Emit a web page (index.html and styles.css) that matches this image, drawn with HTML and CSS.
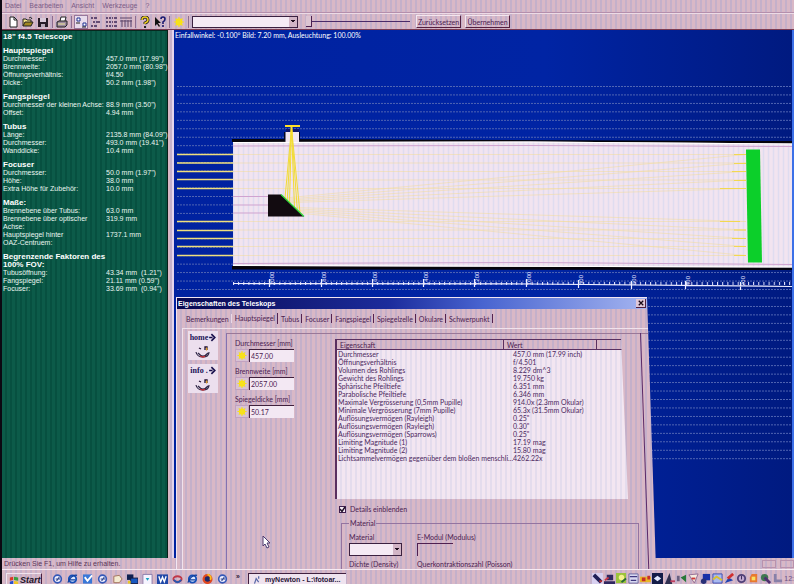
FILE: index.html
```
<!DOCTYPE html>
<html lang="de">
<head>
<meta charset="utf-8">
<title>myNewton</title>
<link rel="stylesheet" href="styles.css">
</head>
<body>
<svg class="defs" aria-hidden="true">
  <symbol id="ie" viewBox="0 0 12 12"><circle cx="6" cy="6" r="4" fill="#dce8ff" stroke="#1550b8" stroke-width="2"/><path d="M3 7h6M1 10C2 5 7 1 11 2" stroke="#1040a0" stroke-width="1.4" fill="none"/></symbol>
  <symbol id="ring" viewBox="0 0 12 12"><circle cx="6" cy="6" r="4.2" fill="#eef" stroke="#3458b8" stroke-width="1.8"/><path d="M4 6h5M5 8l3-4" stroke="#334a90" stroke-width="1.2"/></symbol>
  <symbol id="sun" viewBox="0 0 12 12"><circle cx="6" cy="6" r="3.4" fill="#ffe600"/><path d="M6 1v10M1 6h10M2.5 2.5l7 7M9.500 2.500l-7 7" stroke="#f6e020" stroke-width="1.2"/></symbol>
  <symbol id="face" viewBox="0 0 16 14"><path d="M1 7q1 5 7 5t6-5M3 8q5 6 10 0" stroke="#302848" stroke-width="1.2" fill="none"/><path d="M4 3l2 1M10 5V2h2v3" stroke="#201030" stroke-width="1.3" fill="none"/><path d="M11 2l2 2-2 2" fill="#e0a030"/><path d="M5 11q3 2 5 0" stroke="#c03038" stroke-width="1.4" fill="none"/></symbol>
</svg>
<div class="app">
  <nav class="menubar" aria-label="Menü">
    <a href="#">Datei</a><a href="#">Bearbeiten</a><a href="#">Ansicht</a><a href="#">Werkzeuge</a><a href="#">?</a>
  </nav>

  <div class="toolbar">
    <div class="tools">
      <button aria-label="Neu"><svg viewBox="0 0 12 12"><path d="M3 1h4l3 3v7H3z" fill="#fff" stroke="#222"/><path d="M7 1v3h3" fill="none" stroke="#222"/></svg></button>
      <button aria-label="Öffnen"><svg viewBox="0 0 12 12"><path d="M1 10V3h3l1 1h4v2" fill="#f5e58a" stroke="#222"/><path d="M1 10l2-4h8l-2 4z" fill="#a08820" stroke="#222"/><path d="M7 2q2-2 3 1" fill="none" stroke="#222"/></svg></button>
      <button aria-label="Speichern"><svg viewBox="0 0 12 12"><path d="M1 2h10v9H1z" fill="#281c28"/><path d="M3 2h6v4H3z" fill="#d8c8d8"/><path d="M4 8h4v3H4z" fill="#b8a8b8"/></svg></button>
      <i class="sep"></i>
      <button aria-label="Drucken"><svg viewBox="0 0 12 12"><path d="M4 5l1-4h5L9 5" fill="#fff" stroke="#222"/><path d="M1 6l2-1h8v4l-2 2H1z" fill="#9a8a9c" stroke="#222"/><path d="M2 8h7" stroke="#f4f0a0"/></svg></button>
      <i class="sep"></i>
      <button class="on" aria-label="Große Symbole"><svg viewBox="0 0 12 12"><path d="M2 2h3v3H2zM8 7h3v3H8z" fill="#fff" stroke="#203090"/><path d="M1 7h4M7 11h4" stroke="#222"/></svg></button>
      <button aria-label="Kleine Symbole"><svg viewBox="0 0 12 12"><path d="M1 2h2M4 2h3M3 6h2M6 6h4M1 10h2M4 10h3" stroke="#402858" stroke-width="1.600"/></svg></button>
      <button aria-label="Liste"><svg viewBox="0 0 12 12"><path d="M1 2h2M4 2h2M7 2h1M9 2h3M1 6h2M4 6h2M7 6h1M9 6h3M1 10h2M4 10h2M7 10h1M9 10h3" stroke="#402858" stroke-width="1.600"/></svg></button>
      <button aria-label="Details"><svg viewBox="0 0 12 12"><path d="M0 2h12M2 4v7M5 4v7M8 4v7M11 4v7M0 5h12" stroke="#5c4468"/></svg></button>
      <i class="sep"></i>
      <button aria-label="Hilfe"><svg viewBox="0 0 12 12"><path d="M3 4q0-3 3-3t3 3q0 2-3 3v1" fill="none" stroke="#222" stroke-width="3"/><path d="M3 4q0-3 3-3t3 3q0 2-3 3v1" fill="none" stroke="#f0d020" stroke-width="1.400"/><path d="M5 10h2v2H5z" fill="#222"/></svg></button>
      <button aria-label="Kontexthilfe"><svg viewBox="0 0 12 12"><path d="M1 1v9l2-2 2 3 1-1-2-3h3z" fill="#111"/><path d="M7 3q0-2 2-2t2 2q0 2-2 3v2M9 9v2" fill="none" stroke="#181870" stroke-width="1.600"/></svg></button>
      <i class="sep"></i>
      <button aria-label="Sonne"><svg viewBox="0 0 12 12"><use href="#sun"/></svg></button>
      <i class="sep"></i>
    </div>
    <select class="objects" aria-label="Objekt"><option></option></select>
    <input class="slider" type="range" min="0" max="100" value="0" aria-label="Einfallwinkel">
    <button class="push">Zurücksetzen</button>
    <button class="push">Übernehmen</button>
  </div>

  <main class="work">
    <aside class="summary">
      <h1>18" f4.5 Telescope</h1>
      <section><h2>Hauptspiegel</h2><dl>
        <dt>Durchmesser:</dt><dd>457.0 mm (17.99")</dd>
        <dt>Brennweite:</dt><dd>2057.0 mm (80.98")</dd>
        <dt>Öffnungsverhältnis:</dt><dd>f/4.50</dd>
        <dt>Dicke:</dt><dd>50.2 mm (1.98")</dd></dl></section>
      <section><h2>Fangspiegel</h2><dl>
        <dt>Durchmesser der kleinen Achse:</dt><dd>88.9 mm (3.50")</dd>
        <dt>Offset:</dt><dd>4.94 mm</dd></dl></section>
      <section><h2>Tubus</h2><dl>
        <dt>Länge:</dt><dd>2135.8 mm (84.09")</dd>
        <dt>Durchmesser:</dt><dd>493.0 mm (19.41")</dd>
        <dt>Wanddicke:</dt><dd>10.4 mm</dd></dl></section>
      <section><h2>Focuser</h2><dl>
        <dt>Durchmesser:</dt><dd>50.0 mm (1.97")</dd>
        <dt>Höhe:</dt><dd>38.0 mm</dd>
        <dt>Extra Höhe für Zubehör:</dt><dd>10.0 mm</dd></dl></section>
      <section><h2>Maße:</h2><dl>
        <dt>Brennebene über Tubus:</dt><dd>63.0 mm</dd>
        <dt>Brennebene über optischer<br>Achse:</dt><dd>319.9 mm</dd>
        <dt>Hauptspiegel hinter<br>OAZ-Centruem:</dt><dd>1737.1 mm</dd></dl></section>
      <section><h2>Begrenzende Faktoren des<br>100% FOV:</h2><dl>
        <dt>Tubusöffnung:</dt><dd>43.34 mm&nbsp; (1.21")</dd>
        <dt>Fangspiegel:</dt><dd>21.11 mm (0.59")</dd>
        <dt>Focuser:</dt><dd>33.69 mm&nbsp; (0.94")</dd></dl></section>
    </aside>

    <section class="view">
      <p class="readout">Einfallwinkel: -0.100° Bild: 7.20 mm, Ausleuchtung: 100.00%</p>
      <svg class="drawing" viewBox="174 40 620 425" role="img" aria-label="Strahlengang">
        <defs>
          <pattern id="grid" x="177" y="86" width="3" height="8.460" patternUnits="userSpaceOnUse"><path d="M0 .5h2" stroke="#5468b4" stroke-width="1"/></pattern>
          <pattern id="minor" x="233" y="280" width="5.150" height="7" patternUnits="userSpaceOnUse"><path d="M.5 2v3" stroke="#e6e6ff" stroke-width="1"/></pattern>
          <pattern id="tube" width="5" height="5" patternUnits="userSpaceOnUse"><path d="M0 0h5v5H0z" fill="#f2e4f0"/><path d="M3.500 0v5" stroke="#dfdcf0" stroke-width="1.500"/></pattern>
        </defs>
        <path d="M177 86h617v374H177z" fill="url(#grid)"/>
        <path d="M177 154.500h56M177 163h56M177 171.500h56M177 179.500h56M177 188.500h56M177 221.500h56M177 230.500h56M177 238.500h56M177 246.500h56M177 255.500h56" stroke="#f0df7c" stroke-width="1.300"/>
        <path d="M232 139L794 141V144L232 142zM232 266H794V270L232 269.500z" fill="#06040c"/>
        <path d="M233 142L530 141.500L794 143.500V267.500L233 266z" fill="url(#tube)"/>
        <path d="M233 142.500L530 142L794 144M233 265.500L794 267" stroke="#fff" fill="none"/>
        <path d="M233 146L530 145.500L792 146.500M233 263.500L530 262.500L792 264.500M233 196.500h35M233 205h35M233 213h35" stroke="#cfa3d0" fill="none"/>
        <path d="M284 132h16v9h-16z" fill="#050820"/><path d="M285.500 132h13.500v10h-13.500z" fill="#f3e8f3"/>
        <path d="M286 129h13v3h-13z" fill="#10186c"/>
        <g stroke="#f5dc8c" stroke-width=".6" opacity=".75">
          <path d="M233 154.500H746M233 163H746M233 171.500H746M233 180H746M233 188.500H746M233 221.500H746M233 230H746M233 238.500H746M233 246.500H746M233 255.500H746"/>
          <path d="M746 154.500L285 198M746 163L286.200 199.200M746 171.500L287.200 200.200M746 180L288.400 201.400M746 188.500L289.500 202.500M746 221.500L294.500 207.500M746 230L295.900 208.900M746 238.500L297.300 210.300M746 246.500L298.700 211.700M746 255.500L300.300 213.300"/>
        </g>
        <path d="M734 154.500h12M734 163.500h12M732 171.500h14M734 180.500h12M720 188.500h26M720 221.500h20M734 230h12M732 238.500h14M734 246.500h12M734 255.500h12" stroke="#f2d850"/>
        <path d="M291.500 128L285 198M291.500 128L287.200 200.200M291.500 128L289.500 202.500M291.500 128L294.500 207.500M291.500 128L297.300 210.300M291.500 128L300 213" stroke="#f3dc34" stroke-width="1" fill="none"/>
        <path d="M285 126h15M291.500 126v8" stroke="#ffdf28" stroke-width="2"/>
        <path d="M268 194.500h13L304 216.500h-36z" fill="#120b10"/>
        <path d="M281 194.500L304 216.500" stroke="#32d83c" stroke-width="1.300"/>
        <path d="M746 149.500h14L762 262.500h-14z" fill="#0ccf2a"/>
        <path d="M233 280h561v7H233z" fill="url(#minor)"/>
        <path d="M233 283.500L530 284L794 286.500M269.500 279v8M321.500 279v8M372.500 279v8M423.500 279v8M474.500 279v8M526.500 279v8M578.500 280v8M631.500 281v8M685.500 281v8M740.500 282v8" stroke="#f0efff" stroke-width="1.200" fill="none"/>
        <g class="scale">
          <text transform="translate(274 285) rotate(-90)">2000</text><text transform="translate(326 285) rotate(-90)">1800</text>
          <text transform="translate(377 285) rotate(-90)">1600</text><text transform="translate(428 285) rotate(-90)">1400</text>
          <text transform="translate(479 285) rotate(-90)">1200</text><text transform="translate(531 285) rotate(-90)">1000</text>
          <text transform="translate(583 285) rotate(-90)">800</text><text transform="translate(636 285) rotate(-90)">600</text>
          <text transform="translate(690 286) rotate(-90)">400</text><text transform="translate(745 286) rotate(-90)">200</text>
        </g>
      </svg>
    </section>
  </main>

  <footer class="status"><span>Drücken Sie F1, um Hilfe zu erhalten.</span><i></i><i></i></footer>

  <section class="dialog" aria-label="Eigenschaften des Teleskops">
    <header class="caption"><h2>Eigenschaften des Teleskops</h2><button aria-label="Schließen"><svg viewBox="0 0 8 8"><path d="M1 1l6 6M7 1L1 7" stroke="#180818" stroke-width="1.700"/></svg></button></header>
    <div class="tabs" role="tablist">
      <button role="tab">Bemerkungen</button><button role="tab" class="active" aria-selected="true">Hauptspiegel</button><button role="tab">Tubus</button><button role="tab">Focuser</button><button role="tab">Fangspiegel</button><button role="tab">Spiegelzelle</button><button role="tab">Okulare</button><button role="tab">Schwerpunkt</button>
    </div>
    <div class="panel">
      <div class="side">
        <button><span>home <svg viewBox="0 0 6 8"><path d="M0 4h3M2 1l3 3-3 3" stroke="#18104c" stroke-width="1.500" fill="none"/></svg></span><svg class="face"><use href="#face"/></svg></button>
        <button><span>info .<svg viewBox="0 0 6 8"><path d="M0 4h3M2 1l3 3-3 3" stroke="#18104c" stroke-width="1.500" fill="none"/></svg></span><svg class="face"><use href="#face"/></svg></button>
      </div>
      <div class="page">
        <div class="fields">
          <label for="dm">Durchmesser [mm]</label>
          <div class="entry"><button aria-label="Durchmesser berechnen"><svg><use href="#sun"/></svg></button><input id="dm" value="457.00"></div>
          <label for="bw">Brennweite [mm]</label>
          <div class="entry"><button aria-label="Brennweite berechnen"><svg><use href="#sun"/></svg></button><input id="bw" value="2057.00"></div>
          <label for="sd">Spiegeldicke [mm]</label>
          <div class="entry"><button aria-label="Spiegeldicke berechnen"><svg><use href="#sun"/></svg></button><input id="sd" value="50.17"></div>
        </div>
        <div class="details">
          <div class="list">
            <table>
              <thead><tr><th>Eigenschaft</th><th>Wert</th><th></th></tr></thead>
              <tbody>
                <tr><td>Durchmesser</td><td colspan="2">457.0 mm (17.99 inch)</td></tr>
                <tr><td>Öffnungsverhältnis</td><td colspan="2">f/4.501</td></tr>
                <tr><td>Volumen des Rohlings</td><td colspan="2">8.229 dm^3</td></tr>
                <tr><td>Gewicht des Rohlings</td><td colspan="2">19.750 kg</td></tr>
                <tr><td>Sphärische Pfeiltiefe</td><td colspan="2">6.351 mm</td></tr>
                <tr><td>Parabolische Pfeiltiefe</td><td colspan="2">6.346 mm</td></tr>
                <tr><td>Maximale Vergrösserung (0,5mm Pupille)</td><td colspan="2">914.0x (2.3mm Okular)</td></tr>
                <tr><td>Minimale Vergrösserung (7mm Pupille)</td><td colspan="2">65.3x (31.5mm Okular)</td></tr>
                <tr><td>Auflösungsvermögen (Rayleigh)</td><td colspan="2">0.25"</td></tr>
                <tr><td>Auflösungsvermögen (Rayleigh)</td><td colspan="2">0.30"</td></tr>
                <tr><td>Auflösungsvermögen (Sparrows)</td><td colspan="2">0.25"</td></tr>
                <tr><td>Limiting Magnitude (1)</td><td colspan="2">17.19 mag</td></tr>
                <tr><td>Limiting Magnitude (2)</td><td colspan="2">15.80 mag</td></tr>
                <tr><td>Lichtsammelvermögen gegenüber dem bloßen menschli...</td><td colspan="2">4262.22x</td></tr>
              </tbody>
            </table>
          </div>
          <label class="check"><input type="checkbox" checked><svg viewBox="0 0 7 7"><path d="M1 3l2 2.500L6 1" fill="none" stroke="#201028" stroke-width="1.500"/></svg>Details einblenden</label>
          <fieldset>
            <legend>Material</legend>
            <div><label for="mat">Material</label><select id="mat"><option></option></select><label for="di">Dichte (Density)</label><input id="di"></div>
            <div><label for="em">E-Modul (Modulus)</label><input id="em"><label for="qk">Querkontraktionszahl (Poisson)</label><input id="qk"></div>
          </fieldset>
        </div>
      </div>
    </div>
  </section>
  <svg class="pointer" viewBox="0 0 9 14" aria-hidden="true"><path d="M1 1v10l2-2 2 4 2-1-2-4h3z" fill="#fff" stroke="#4a3a70"/></svg>

  <footer class="taskbar">
    <button class="start"><svg viewBox="0 0 12 12"><path d="M1 3l4-1v4l-4 1z" fill="#d83c28"/><path d="M6 2l5 1v4L6 6z" fill="#38a040"/><path d="M1 8l4-1v4l-4 1z" fill="#2850d0"/><path d="M6 7l5 1v4l-5-1z" fill="#f0c828"/></svg>Start</button>
    <div class="quick">
      <svg><use href="#ring"/></svg><svg><use href="#ie"/></svg>
      <svg viewBox="0 0 12 12"><path d="M1 1h10v10H1z" fill="#3878d8"/><path d="M3 4l3 4 5-6" stroke="#fff" stroke-width="2" fill="none"/></svg>
      <svg><use href="#ring"/></svg>
      <svg viewBox="0 0 12 12"><path d="M2 3l6-1 3 4-3 4H2z" fill="#f4ead0" stroke="#a07058"/></svg>
      <svg viewBox="0 0 12 12"><path d="M0 1h7v6H0z" fill="#102050"/><path d="M4 5h8v6H4z" fill="#1858c0" stroke="#101840"/><path d="M1 8h3v3H1z" fill="#e8c828"/></svg>
      <svg viewBox="0 0 12 12"><path d="M1 1h10v11H1z" fill="#f6f4ff" stroke="#8878a8"/><path d="M4 5h4L6 8z" fill="#18a0c0"/></svg>
      <svg viewBox="0 0 12 12"><path d="M0 1h12v11H0z" fill="#2048a8"/><path d="M2 3l2 6 2-5 2 5 2-6" stroke="#fff" stroke-width="1.500" fill="none"/></svg>
      <svg viewBox="0 0 12 12"><ellipse cx="6" cy="6" rx="4.500" ry="3" fill="none" stroke="#c03848" stroke-width="2"/><path d="M2 7q4 5 8 0" stroke="#2858b0" stroke-width="2" fill="none"/></svg>
      <svg><use href="#ie"/></svg>
      <svg viewBox="0 0 12 12"><circle cx="6" cy="6" r="5.500" fill="#e04820"/><circle cx="6" cy="6" r="3" fill="#202868"/><path d="M6 1q5 2 3 6" stroke="#f8c020" stroke-width="2" fill="none"/></svg>
      <svg><use href="#ring"/></svg>
    </div>
    <span class="more">»</span>
    <button class="task"><svg viewBox="0 0 12 12"><path d="M3 11l2-6 3 4M8 2v3" stroke="#5868a8" stroke-width="1.500" fill="none"/></svg>myNewton - L:\fotoar...</button>
    <div class="tray">
      <svg viewBox="0 0 12 12"><path d="M0 0h12v12H0z" fill="#d8d0f0"/><path d="M2 2l8 8" stroke="#202058" stroke-width="4"/><path d="M8 9h3" stroke="#c03030" stroke-width="2"/></svg>
      <svg viewBox="0 0 12 12"><path d="M3 2h7v6H3zM0 9h12v3H0z" fill="#302860"/><path d="M1 8l4-3" stroke="#c83848" stroke-width="2"/></svg>
      <svg viewBox="0 0 12 12"><path d="M0 0h11v11H0z" fill="#9cc43c"/><circle cx="6" cy="5" r="3" fill="#f4f090"/><path d="M6 10l5-4" stroke="#286838" stroke-width="2"/></svg>
      <svg viewBox="0 0 12 12"><path d="M1 1h10v10H1z" fill="#d8d8f0" stroke="#6868a0"/><path d="M2 4h8M3 8h6" stroke="#403880" stroke-width="1.500"/></svg>
      <svg viewBox="0 0 12 12"><path d="M0 4h12v6H0z" fill="#e8b828"/><path d="M2 5h4v4H2zM8 3h3v4H8z" fill="#c83028"/></svg>
      <svg viewBox="0 0 12 12"><path d="M0 0h12v12H0z" fill="#141c48"/><path d="M2 6l4-3 4 3-4 3z" fill="#e0e8ff"/></svg>
      <svg viewBox="0 0 12 12"><path d="M6 0l3 12H1z" fill="#303050"/><path d="M7 9h5" stroke="#c04060" stroke-width="2"/></svg>
      <svg viewBox="0 0 12 12"><path d="M1 3h3v6H1z" fill="#6a6080"/><path d="M5 5l6-3v8z" fill="#287838"/></svg>
      <svg viewBox="0 0 12 12"><path d="M1 2l10-1-4 10z" fill="#f4ece0" stroke="#906890"/><path d="M4 6h4" stroke="#d03838" stroke-width="2"/></svg>
      <svg viewBox="0 0 12 12"><path d="M3 1h8v7H3z" fill="#1830a8"/><circle cx="4" cy="9" r="3" fill="#283078"/></svg>
      <svg viewBox="0 0 12 12"><path d="M1 1h10v10H1z" fill="#a8b8f0" stroke="#3848b0"/><path d="M1 7l4-3 6 4" stroke="#d8c030" stroke-width="2" fill="none"/></svg>
      <svg viewBox="0 0 12 12"><path d="M1 11l4-6 5 3z" fill="#2040b0"/><path d="M4 6l6-5" stroke="#d03030" stroke-width="3"/></svg>
      <svg viewBox="0 0 12 12"><circle cx="6" cy="6" r="4" fill="#c0a8d0" stroke="#504078" stroke-width="2"/><path d="M6 3v4" stroke="#302050"/></svg>
      <svg viewBox="0 0 12 12"><path d="M4 1h6v9H2V5z" fill="#e87830"/><path d="M4 4h4v4H4z" fill="#f8e060"/></svg>
      <svg viewBox="0 0 12 12"><circle cx="5" cy="5" r="4" fill="#407850"/><path d="M5 5l6 6" stroke="#503070" stroke-width="3"/></svg>
      <svg viewBox="0 0 12 12"><path d="M2 1v9h9V7H5V1z" fill="#8880a8"/></svg>
      <time>12:</time>
    </div>
  </footer>
</div>
</body>
</html>
```
FILE: styles.css
```
:root {
  --ink: #4c2050;
  --stripes: repeating-linear-gradient(90deg, #d9b8c6 0 3px, #c4b0ca 3px 5px);
}
* { box-sizing: border-box; }
body {
  margin: 0;
  font: 7px/8px "Liberation Sans", Arial, sans-serif;
  color: var(--ink);
}
h1, h2, p, dl, dd { margin: 0; }
button, input, select { font: inherit; color: inherit; margin: 0; padding: 0; border: 0; border-radius: 0; background: none; }
svg { display: block; }
.defs { position: absolute; width: 0; height: 0; }

.app {
  position: relative;
  display: grid;
  grid-template-rows: 13px 17px 1fr 11px 15px;
  height: 100vh;
  overflow: hidden;
  background: var(--stripes);
  border-left: 2px solid #0c0812;
}

.menubar { display: flex; gap: 8px; align-items: center; padding-left: 3px; border-bottom: 1px solid #b58fac; }
.menubar a { color: #7d5c86; text-decoration: none; }

.toolbar { display: flex; align-items: center; padding-left: 2px; border-top: 1px solid #ecdbe6; border-bottom: 1px solid #7a3a52; }
.tools { display: flex; align-items: center; gap: 3px; width: 188px; padding-left: 3px; }
.tools button { flex: none; width: 12px; height: 12px; padding: 0; }
.tools .on { background: #e8dcec; outline: 1px solid #98789c; }
.tools .sep { width: 1px; height: 12px; background: #8d6d90; }
.tools svg { width: 12px; height: 12px; }
select {
  appearance: none;
  border: 1px solid #3b2140;
  background: linear-gradient(45deg, transparent 50%, #201020 50%) right 4px center / 2px 3px no-repeat,
    linear-gradient(-45deg, transparent 50%, #201020 50%) right 2px center / 2px 3px no-repeat,
    linear-gradient(#d2b5c6, #d2b5c6) right / 8px 100% no-repeat, #f5eaf4;
}
.objects { width: 106px; height: 12px; }
.slider { appearance: none; width: 104px; height: 12px; margin: 0 6px 0 8px; background: linear-gradient(#4a2a68, #4a2a68) center / 100% 1px no-repeat; }
.slider::-webkit-slider-thumb { appearance: none; width: 6px; height: 11px; background: #dcc4d2; border: 1px solid #4a2050; border-width: 0 1px 1px 0; }
.push { height: 13px; width: 45px; margin-right: 4px; font-family: Lato, sans-serif; border: 1px solid #f3e6ee; border-right-color: #542040; border-bottom-color: #542040; white-space: nowrap; }

.work { display: grid; grid-template-columns: 170px 1fr; min-height: 0; }
.summary {
  display: flex;
  flex-direction: column;
  gap: 6px;
  margin-right: 4px;
  padding: 2px 0 0 1px;
  color: #eaf6f0;
  background: repeating-linear-gradient(90deg, #0c5b49 0 3px, #075040 3px 5px);
  border-top: 1px solid #06281e;
  border-right: 1px solid #0a2018;
}
.summary h1, .summary h2 { font: bold 8px/8px "Liberation Sans", Arial, sans-serif; color: #fff; }
.summary dl { display: grid; grid-template-columns: 103px 1fr; }
.summary dt, .summary dd { white-space: nowrap; }

.view {
  min-width: 0;
  overflow: hidden;
  background: linear-gradient(90deg, #0022a0, #0024a4 60%, #001a80);
  border-left: 2px solid #e4d4ec;
  border-right: 2px solid #3c70e8;
}
.readout { height: 10px; padding: 1px 0 0 1px; font-family: Lato, sans-serif; color: #fff; white-space: nowrap; }
.drawing { width: calc(100% + 2px); height: auto; }
.scale text { font: 6px "Liberation Sans", Arial, sans-serif; fill: #e6e4ff; }

.status { display: flex; align-items: center; gap: 4px; padding-left: 2px; color: #5b3556; }
.status span { margin-right: auto; }
.status i { width: 14px; height: 8px; border: 1px solid #b892ae; }

.dialog {
  position: absolute;
  left: 174px;
  top: 297px;
  bottom: 15px;
  width: 480px;
  display: flex;
  flex-direction: column;
  overflow: hidden;
  font-family: Lato, "Liberation Sans", sans-serif;
  background: var(--stripes);
  border-left: 1px solid #f3e6f2;
  border-top: 1px solid #f3e6f2;
  clip-path: polygon(0 0, 471px 0, 100% 100%, 0 100%);
}
.dialog::after {
  content: "";
  position: absolute;
  left: 463px;
  top: 35px;
  bottom: 0;
  width: 8px;
  border-left: 1px solid #5b2a68;
  border-right: 2px solid #52103a;
  transform: skewX(2deg);
  transform-origin: top;
}
.caption {
  flex: none;
  display: flex;
  align-items: center;
  justify-content: space-between;
  height: 11px;
  width: 470px;
  padding: 0 1px;
  background: linear-gradient(90deg, #080850, #1c2c9c 45%, #4864d0 65%, #a4b4f0);
}
.caption h2 { font: bold 7px/8px "Liberation Sans", Arial, sans-serif; color: #fff; }
.caption button { width: 10px; height: 9px; padding: 1px 2px; background: #e0c8d8; border-right: 1px solid #502040; border-bottom: 1px solid #502040; }
.caption svg { width: 6px; height: 6px; }
.tabs { flex: none; display: flex; align-items: center; height: 19px; padding-left: 6px; }
.tabs button { height: 9px; padding: 0 2px 0 3px; border-right: 1px solid #552350; white-space: nowrap; }
.tabs button:first-child { border-right-color: #e9d8e6; }
.tabs .active { height: 11px; padding-bottom: 2px; }
.panel { flex: 1; display: flex; min-height: 0; margin-left: 5px; border-top: 1px solid #f0e2ec; border-left: 1px solid #f0e2ec; }
.side { width: 43px; padding: 2px 0 0 5px; }
.side button { display: block; width: 30px; height: 29px; margin-bottom: 4px; background: #ecdfee; }
.side span { display: flex; justify-content: center; gap: 1px; font: bold 8px/10px "Liberation Serif", serif; color: #1b1256; }
.side span svg { width: 7px; height: 9px; }
.side .face { width: 16px; height: 14px; margin: 2px auto 0; }
.page { flex: 1; display: flex; align-items: flex-start; margin-top: 4px; border-top: 1px solid #9a7898; border-left: 1px solid #8472b0; }
.fields { width: 108px; padding: 5px 0 0 8px; }
.fields label { display: block; height: 10px; white-space: nowrap; }
.entry { display: flex; width: 59px; height: 13px; margin-bottom: 5px; }
.entry button { width: 14px; background: #d8c2d4; border: 1px solid #c2a2c0; }
.entry svg { width: 12px; height: 11px; }
.entry input { flex: 1; min-width: 0; padding-left: 1px; background: #f3e8f3; border-left: 1px solid #40203c; border-top: 1px solid #40203c; }
.details { width: 310px; padding-top: 5px; }
.list { width: 293px; height: 160px; background: repeating-linear-gradient(90deg, #f3e6f1 0 3px, #e4dced 3px 5px); border-left: 2px solid #5a3060; border-top: 1px solid #5a3060; clip-path: polygon(0 0, 286px 0, 100% 100%, 0 100%); }
table { width: 100%; border-collapse: separate; border-spacing: 0; table-layout: fixed; }
th { height: 10px; padding: 0 3px; text-align: left; font-weight: normal; background: var(--stripes); border-right: 1px solid #5a3060; border-bottom: 1px solid #5a3060; }
th:nth-child(1) { width: 167px; }
th:nth-child(2) { width: 93px; }
th:last-child { border-right: 0; }
td { height: 8px; padding: 0 1px; white-space: nowrap; color: #4c2860; }
td:last-child { padding-left: 9px; }
.check { position: relative; display: flex; align-items: center; gap: 4px; height: 10px; margin: 5px 0 5px 4px; }
.check input { appearance: none; width: 7px; height: 7px; background: #f6ecf6; border: 1px solid #402050; }
.check svg { position: absolute; left: 0; width: 7px; height: 7px; pointer-events: none; }
fieldset { display: grid; grid-template-columns: 53px 1fr; gap: 15px; height: 80px; min-width: 0; width: 298px; margin: 0 0 0 6px; padding: 6px 7px; border: 1px solid #9474a0; }
legend { padding: 0 1px; }
fieldset div { display: flex; flex-direction: column; }
fieldset label { height: 10px; white-space: nowrap; }
fieldset select, fieldset input { flex: none; height: 13px; width: 53px; margin-bottom: 4px; }
fieldset input { width: 36px; border-top: 1px solid #502050; border-left: 1px solid #502050; }

.pointer { position: absolute; left: 260px; top: 535px; width: 9px; height: 14px; }

.taskbar { z-index: 1; display: flex; align-items: flex-start; padding: 3px 0 0 4px; overflow: hidden; background: var(--stripes); border-top: 1px solid #f6ebf4; }
.start { display: flex; align-items: center; gap: 1px; width: 36px; height: 14px; padding-left: 2px; font: italic bold 9px/10px "Liberation Sans", Arial, sans-serif; color: #1c1428; border: 1px solid #f0e4ee; border-right-color: #4a2040; }
.start svg { width: 10px; height: 10px; }
.quick { display: flex; gap: 3px; margin-left: 10px; }
.quick svg { width: 11px; height: 12px; margin-right: 1px; }
.quick svg:last-child { margin-right: 0; }
.more { width: 10px; margin: 0 2px 0 8px; font-weight: bold; color: #301838; }
.task { display: flex; align-items: center; gap: 3px; height: 12px; width: 98px; padding-left: 3px; font-weight: bold; color: #281438; background: #efe3ef; border-left: 1px solid #402040; border-top: 1px solid #402040; white-space: nowrap; }
.task svg { width: 10px; height: 11px; }
.tray { display: flex; gap: 1px; margin-left: auto; }
.tray svg { width: 11px; height: 11px; }
.tray time { padding-top: 2px; color: #705080; }
```
